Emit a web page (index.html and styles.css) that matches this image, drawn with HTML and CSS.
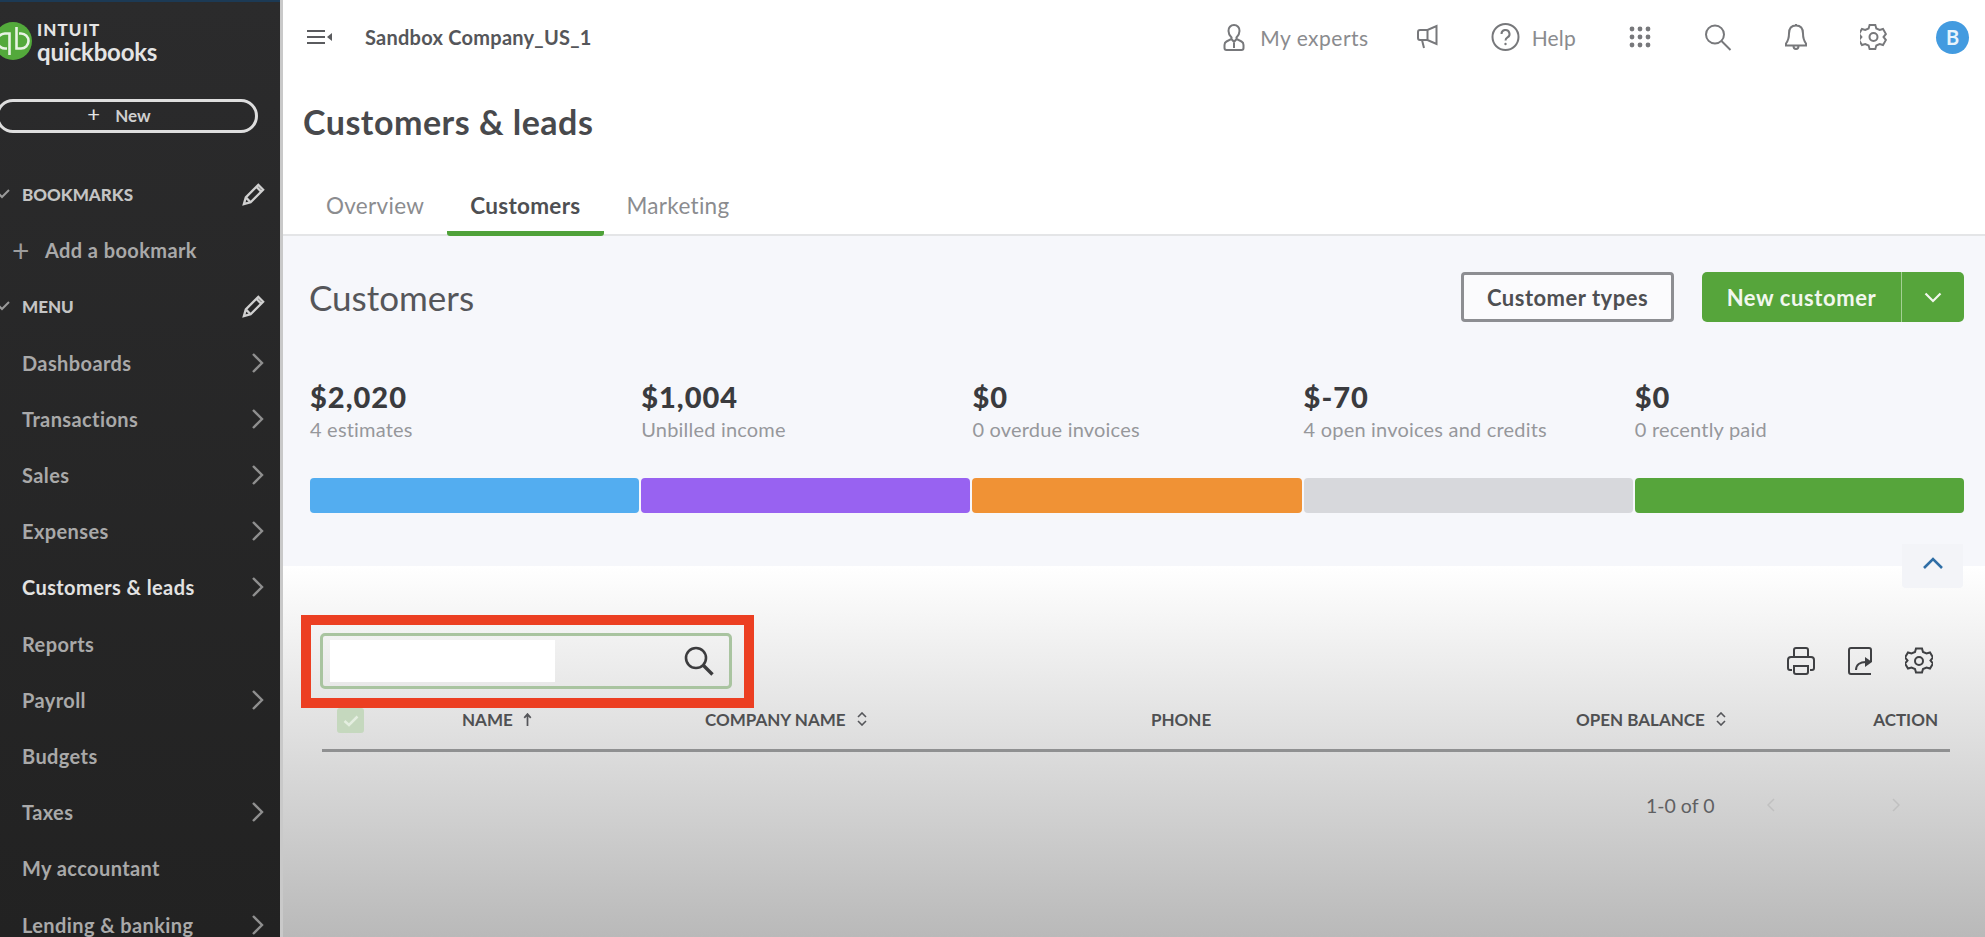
FILE: index.html
```html
<!DOCTYPE html>
<html lang="en">
  <head>
    <meta charset="utf-8" />
    <title>Customers &amp; leads</title>
    <link rel="stylesheet" href="styles.css">
  </head>

  <body>
    <div class="app">
      <aside class="sidebar">
        <div class="brand">
          <svg class="brand-logo" viewBox="0 0 38 38">
            <circle cx="19" cy="19" r="19" fill="#53a93b" />
            <path d="M15.500 33V11.500h-4.500a7.500 7.500 0 0 0 0 15h2M22.500 5v21.500h4.500a7.500 7.500 0 0 0 0-15h-2" fill="none" stroke="#e8f3e4" stroke-width="2.6" />
          </svg>
          <div class="brand-name">
            <span class="brand-top">INTUIT</span>
            <span class="brand-bottom">quickbooks</span>
          </div>
        </div>

        <button class="new-btn"><span class="new-plus">+</span> New</button>

        <div class="side-list">
          <div class="side-row side-head">
            <svg class="side-toggle" viewBox="0 0 12 10"><path d="M-1 5l3 3 7-7" /></svg>
            <span>BOOKMARKS</span>
            <svg class="side-pencil" viewBox="0 0 26 26"><path d="M3 23l2-7L18 3l5 5L10 21zM5 16l5 5M16 5l5 5" /></svg>
          </div>
          <div class="side-row side-add"><span class="side-add-plus">+</span>Add a bookmark</div>
          <div class="side-row side-head">
            <svg class="side-toggle" viewBox="0 0 12 10"><path d="M-1 5l3 3 7-7" /></svg>
            <span>MENU</span>
            <svg class="side-pencil" viewBox="0 0 26 26"><path d="M3 23l2-7L18 3l5 5L10 21zM5 16l5 5M16 5l5 5" /></svg>
          </div>
          <a class="side-row">Dashboards<svg class="side-more" viewBox="0 0 14 22"><path d="M2 2l9 9-9 9" /></svg></a>
          <a class="side-row">Transactions<svg class="side-more" viewBox="0 0 14 22"><path d="M2 2l9 9-9 9" /></svg></a>
          <a class="side-row">Sales<svg class="side-more" viewBox="0 0 14 22"><path d="M2 2l9 9-9 9" /></svg></a>
          <a class="side-row">Expenses<svg class="side-more" viewBox="0 0 14 22"><path d="M2 2l9 9-9 9" /></svg></a>
          <a class="side-row active">Customers &amp; leads<svg class="side-more" viewBox="0 0 14 22"><path d="M2 2l9 9-9 9" /></svg></a>
          <a class="side-row">Reports</a>
          <a class="side-row">Payroll<svg class="side-more" viewBox="0 0 14 22"><path d="M2 2l9 9-9 9" /></svg></a>
          <a class="side-row">Budgets</a>
          <a class="side-row">Taxes<svg class="side-more" viewBox="0 0 14 22"><path d="M2 2l9 9-9 9" /></svg></a>
          <a class="side-row">My accountant</a>
          <a class="side-row">Lending &amp; banking<svg class="side-more" viewBox="0 0 14 22"><path d="M2 2l9 9-9 9" /></svg></a>
        </div>
      </aside>

      <main class="main">
        <header class="topbar">
          <svg class="menu-icon" viewBox="0 0 26 16"><path d="M0 2h18M0 8h18M0 14h18" /><path class="menu-arrow" d="M25 4v8l-5-4z" /></svg>
          <span class="company">Sandbox Company_US_1</span>
          <div class="top-actions">
            <div class="top-link experts-link">
              <svg class="top-icon" width="22" height="29" viewBox="0 0 22 29"><path d="M11 2a5.500 5.500 0 0 1 5.500 6c0 3-1.500 5-3 6.500v1.500l5 2.500q2 1 2 3.500v3q0 2-2 2H3.500q-2 0-2-2v-3q0-2.500 2-3.500l5-2.500v-1.500c-1.500-1.500-3-3.500-3-6.500A5.500 5.500 0 0 1 11 2zM8.500 16l2.500 3 2.500-3M11 20v5" /></svg>
              <span>My experts</span>
            </div>
            <svg class="top-icon" width="21" height="26" viewBox="0 0 21 26"><path d="M19.500 2v18l-9-4H3q-2 0-2-2V8q0-2 2-2h7.500zM10.500 6v10M5 16l2 8" /></svg>
            <div class="top-link help-link">
              <svg class="top-icon" width="29" height="30" viewBox="0 0 29 30"><circle cx="14.500" cy="15" r="13" /><path d="M10.500 12a4 4 0 1 1 6 3.400c-1.300.8-2 1.400-2 3" /><circle class="top-dot" cx="14.500" cy="22" r="1.200" /></svg>
              <span>Help</span>
            </div>
            <svg class="top-grid" width="22" height="22" viewBox="0 0 22 22"><circle cx="3" cy="3" r="2.400" /><circle cx="11" cy="3" r="2.400" /><circle cx="19" cy="3" r="2.400" /><circle cx="3" cy="11" r="2.400" /><circle cx="11" cy="11" r="2.400" /><circle cx="19" cy="11" r="2.400" /><circle cx="3" cy="19" r="2.400" /><circle cx="11" cy="19" r="2.400" /><circle cx="19" cy="19" r="2.400" /></svg>
            <svg class="top-icon" width="28" height="27" viewBox="0 0 28 27"><circle cx="11" cy="10.500" r="9" /><path d="M17.500 17l9 9" /></svg>
            <svg class="top-icon" width="22" height="29" viewBox="0 0 22 29"><path d="M11 2.500c-5 0-7 3.500-7 8 0 5-1.500 8-3 10v2h20v-2c-1.500-2-3-5-3-10 0-4.500-2-8-7-8zM11 1v2M8.500 23a2.500 3 0 0 0 5 0" /></svg>
            <svg class="top-icon" width="27" height="28" viewBox="0 0 27 28"><path d="M10.500 2h6l1 3.500 3.500 1.500 3.500-1 3 5-2.500 3 2.500 3-3 5-3.500-1-3.500 1.500-1 3.500h-6l-1-3.500-3.500-1.500-3.500 1-3-5 2.500-3-2.500-3 3-5 3.500 1 3.500-1.500z" transform="translate(-.5 0) scale(.96 1)" /><circle cx="13.500" cy="14" r="4" /></svg>
            <div class="avatar">B</div>
          </div>
        </header>

        <h1 class="page-title">Customers &amp; leads</h1>

        <nav class="tabs">
          <a class="tab">Overview</a>
          <a class="tab active">Customers</a>
          <a class="tab">Marketing</a>
        </nav>

        <section class="panel">
          <div class="panel-head">
            <h2>Customers</h2>
            <button class="btn-outline">Customer types</button>
            <div class="btn-split">
              <button class="btn-main">New customer</button>
              <button class="btn-caret"><svg viewBox="0 0 18 11"><path d="M1.500 1.500L9 9l7.500-7.500" /></svg></button>
            </div>
          </div>

          <div class="stats">
            <div class="stat"><strong>$2,020</strong><span>4 estimates</span><i class="bar blue"></i></div>
            <div class="stat"><strong>$1,004</strong><span>Unbilled income</span><i class="bar purple"></i></div>
            <div class="stat"><strong>$0</strong><span>0 overdue invoices</span><i class="bar orange"></i></div>
            <div class="stat"><strong>$-70</strong><span>4 open invoices and credits</span><i class="bar grey"></i></div>
            <div class="stat"><strong>$0</strong><span>0 recently paid</span><i class="bar green"></i></div>
          </div>
        </section>

        <section class="table-area">
          <div class="collapse-tab"><svg viewBox="0 0 22 13"><path d="M2 11l9-9 9 9" /></svg></div>

          <div class="table-tools">
            <div class="search-box">
              <div class="search-hidden"></div>
              <svg class="search-icon" viewBox="0 0 30 30"><circle cx="12" cy="12" r="10" /><path class="thick" d="M19.500 19.500l9 9" /></svg>
            </div>
            <div class="tool-icons">
              <svg viewBox="0 0 28 28"><path d="M7 10V3q0-2 2-2h10q2 0 2 2v7M5 23H3q-2 0-2-2v-8q0-3 3-3h20q3 0 3 3v8q0 2-2 2h-2M7 19h14v6q0 2-2 2H9q-2 0-2-2z" /></svg>
              <svg viewBox="0 0 26 28"><path d="M24 15V3q0-2-2-2H4Q2 1 2 3v22q0 2 2 2h20M9 23c0-5 4-8 10-8" /><path class="solid" d="M18 10l7 5-7 5z" /></svg>
              <svg viewBox="0 0 28 28"><path d="M11 1.500h6l1 3.500 3.500 1.500 3.500-1 3 5-2.500 3 2.500 3-3 5-3.500-1-3.500 1.500-1 3.500h-6l-1-3.500-3.500-1.500-3.500 1-3-5 2.500-3-2.500-3 3-5 3.500 1 3.500-1.500z" /><circle cx="14" cy="14" r="4" /></svg>
            </div>
          </div>

          <div class="table-head">
            <div><span class="check"><svg viewBox="0 0 16 12"><path d="M1.500 6l4.500 4 8.500-8.500" /></svg></span></div>
            <div>NAME <svg class="sort-up" viewBox="0 0 8 12"><path d="M4 12V2M1 4.500L4 1l3 3.500" /></svg></div>
            <div>COMPANY NAME <svg class="sort" viewBox="0 0 10 14"><path d="M1 5l4-4 4 4M1 9l4 4 4-4" /></svg></div>
            <div>PHONE</div>
            <div>OPEN BALANCE <svg class="sort" viewBox="0 0 10 14"><path d="M1 5l4-4 4 4M1 9l4 4 4-4" /></svg></div>
            <div class="col-action">ACTION</div>
          </div>

          <div class="pager">
            <span>1-0 of 0</span>
            <svg class="pager-prev" viewBox="0 0 8 14"><path d="M7 1L1 7l6 6" /></svg>
            <svg class="pager-next" viewBox="0 0 8 14"><path d="M1 1l6 6-6 6" /></svg>
          </div>

          <div class="red-mark"></div>
        </section>
      </main>
    </div>
  </body>
</html>
```

FILE: styles.css
```css
* {
  box-sizing: border-box;
}

html,
body {
  margin: 0;
  height: 937px;
  overflow: hidden;
}

body {
  font-family: "Lato", "Open Sans", sans-serif;
  color: #393a3d;
  background: #fff;
}

button {
  font-family: inherit;
  cursor: pointer;
}

.app {
  display: flex;
  height: 937px;
}

/* sidebar */

.sidebar {
  flex: 0 0 280px;
  height: 937px;
  overflow: hidden;
  padding-top: 20px;
  border-top: 2px solid #1c3a55;
  background: linear-gradient(#2b2b2c, #222);
  color: #bdbdbd;
}

.brand {
  display: flex;
  align-items: center;
  gap: 5px;
  height: 38px;
  margin-left: -6px;
}

.brand-logo {
  flex: none;
  width: 38px;
  height: 38px;
}

.brand-name {
  display: flex;
  flex-direction: column;
  margin-top: 3px;
  color: #e4e4e4;
}

.brand-top {
  font-size: 17px;
  font-weight: 900;
  line-height: 18px;
  letter-spacing: 1.1px;
}

.brand-bottom {
  font-size: 24px;
  font-weight: 700;
  line-height: 25px;
  letter-spacing: -0.2px;
}

.new-btn {
  display: block;
  width: 262px;
  height: 34px;
  margin: 39px 0 0 -4px;
  padding: 0 16px 2px 0;
  border: 3px solid #dedede;
  border-radius: 17px;
  background: transparent;
  color: #cfcfcf;
  font-size: 17px;
  font-weight: 700;
}

.new-plus {
  margin-right: 11px;
  font-size: 22px;
  font-weight: 400;
  line-height: 10px;
  color: #e6e6e6;
}

.side-list {
  margin-top: 33px;
}

.side-row {
  display: flex;
  align-items: center;
  height: 56.2px;
  padding: 0 15px 0 22px;
  font-size: 20px;
  font-weight: 700;
  letter-spacing: 0.4px;
  color: #a9a9a9;
}

.side-row.active {
  color: #e2e2e2;
}

.side-head {
  position: relative;
  padding-right: 16px;
  font-size: 17px;
  font-weight: 900;
  letter-spacing: 0;
  color: #c4c4c4;
}

.side-toggle {
  flex: none;
  width: 12px;
  height: 10px;
  margin-left: -22px;
  margin-right: 10px;
  fill: none;
  stroke: #9a9a9a;
  stroke-width: 2;
}

.side-pencil {
  flex: none;
  width: 25px;
  height: 25px;
  margin-left: auto;
  margin-right: -2px;
  fill: none;
  stroke: #d0d0d0;
  stroke-width: 2.4;
}

.side-add {
  padding-left: 12px;
}

.side-add-plus {
  width: 33px;
  font-size: 30px;
  font-weight: 400;
  line-height: 20px;
  color: #9c9c9c;
}

.side-more {
  flex: none;
  width: 14px;
  height: 22px;
  margin-left: auto;
  fill: none;
  stroke: #8f8f8f;
  stroke-width: 2.4;
}

/* main column */

.main {
  position: relative;
  display: flex;
  flex-direction: column;
  flex: 1;
  min-width: 0;
  border-left: 3px solid #c9c9c9;
}

.topbar {
  display: flex;
  align-items: center;
  height: 74px;
  padding: 0 16px 0 24px;
}

.menu-icon {
  width: 26px;
  height: 16px;
  fill: none;
  stroke: #5a5b5e;
  stroke-width: 2;
}

.menu-icon .menu-arrow {
  fill: #5a5b5e;
  stroke: none;
}

.company {
  margin-left: 32px;
  font-size: 20px;
  font-weight: 700;
  letter-spacing: 0.25px;
  color: #55565a;
}

.top-actions {
  display: flex;
  align-items: center;
  gap: 53px;
  margin-left: auto;
}

.top-link {
  display: flex;
  align-items: center;
  gap: 17px;
  font-size: 21px;
  letter-spacing: 0.2px;
  color: #8a8b8e;
}

.experts-link {
  gap: 15px;
  margin-right: -5px;
  letter-spacing: 0.5px;
}

.help-link {
  gap: 12px;
}

.top-icon {
  fill: none;
  stroke: #77787b;
  stroke-width: 2;
}

.top-icon .top-dot {
  fill: #77787b;
  stroke: none;
}

.top-grid {
  fill: #77787b;
}

.avatar {
  display: flex;
  align-items: center;
  justify-content: center;
  width: 33px;
  height: 33px;
  margin-left: -4px;
  border-radius: 50%;
  background: #439be0;
  color: #e8f4fc;
  font-size: 20px;
  font-weight: 700;
}

.page-title {
  margin: 26px 0 0 20px;
  font-size: 34px;
  font-weight: 700;
  line-height: 44px;
  letter-spacing: 0.5px;
  color: #48494c;
}

.tabs {
  display: flex;
  height: 64px;
  margin-top: 28px;
  padding-left: 20px;
  border-bottom: 2px solid #e4e5e7;
}

.tab {
  height: 64px;
  padding: 20px 23px 0;
  font-size: 22.500px;
  letter-spacing: 0.3px;
  color: #8b8c8f;
  border-bottom: 5px solid transparent;
}

.tab.active {
  font-weight: 700;
  color: #4e4f52;
  border-bottom-color: #4fa23a;
  border-radius: 0 0 3px 3px;
}

/* customers panel */

.panel {
  height: 330px;
  padding: 36px 21px 0 27px;
  background: #f6f7fb;
}

.panel-head {
  display: flex;
  align-items: center;
  height: 50px;
}

.panel-head h2 {
  margin: 0 auto 0 -1px;
  font-size: 35px;
  font-weight: 400;
  color: #55565a;
}

.btn-outline {
  width: 213px;
  height: 50px;
  margin-right: 28px;
  border: 3px solid #8d8e92;
  border-radius: 4px;
  background: #fbfbfd;
  color: #4e4f52;
  font-size: 22px;
  font-weight: 700;
  letter-spacing: 0.5px;
}

.btn-split {
  display: flex;
  width: 262px;
  height: 50px;
  border-radius: 5px;
  overflow: hidden;
  background: #56a53b;
}

.btn-main {
  width: 200px;
  padding: 0;
  border: 0;
  border-right: 1px solid #a4d094;
  background: transparent;
  color: #f2f7ee;
  font-size: 22px;
  font-weight: 700;
  letter-spacing: 0.6px;
}

.btn-caret {
  display: flex;
  align-items: center;
  justify-content: center;
  flex: 1;
  padding: 0;
  border: 0;
  background: transparent;
}

.btn-caret svg {
  width: 18px;
  height: 11px;
  fill: none;
  stroke: #f2f7ee;
  stroke-width: 2.2;
}

.stats {
  display: grid;
  grid-template-columns: repeat(5, 1fr);
  column-gap: 2px;
  margin-top: 57px;
}

.stat {
  display: flex;
  flex-direction: column;
}

.stat strong {
  font-size: 29px;
  font-weight: 900;
  line-height: 36px;
  letter-spacing: 1px;
  color: #3a3b3e;
}

.stat span {
  margin-top: 2px;
  font-size: 20px;
  line-height: 24px;
  letter-spacing: 0.2px;
  color: #96979b;
}

.bar {
  display: block;
  height: 35px;
  margin-top: 37px;
  border-radius: 4px;
}

.bar.blue { background: #53adf0; }
.bar.purple { background: #9862f1; }
.bar.orange { background: #f09235; }
.bar.grey { background: #d7d8dc; }
.bar.green { background: #56a53b; }

/* table */

.table-area {
  position: relative;
  flex: 1;
  padding: 67px 35px 0 37px;
  background: linear-gradient(#fff, #b9b9b9);
}

.collapse-tab {
  position: absolute;
  top: -22px;
  right: 22px;
  display: flex;
  justify-content: center;
  width: 61px;
  height: 44px;
  padding-top: 13px;
  border-radius: 0 0 4px 4px;
  background: #f3f4f8;
}

.collapse-tab svg {
  width: 22px;
  height: 13px;
  fill: none;
  stroke: #2f6ea6;
  stroke-width: 2.6;
}

.table-tools {
  display: flex;
  align-items: center;
  justify-content: space-between;
  padding-right: 17px;
}

.search-box {
  display: flex;
  align-items: center;
  justify-content: space-between;
  width: 412px;
  height: 56px;
  padding: 0 15px 0 7px;
  border: 3px solid #a9c4a0;
  border-radius: 5px;
}

.search-hidden {
  width: 225px;
  height: 42px;
  background: #fff;
}

.search-icon {
  width: 30px;
  height: 30px;
  fill: none;
  stroke: #3c3c3e;
  stroke-width: 2.6;
}

.search-icon .thick {
  stroke-width: 3.4;
}

.tool-icons {
  display: flex;
  align-items: center;
  gap: 31px;
}

.tool-icons svg {
  width: 28px;
  height: 28px;
  fill: none;
  stroke: #3f4043;
  stroke-width: 2;
}

.tool-icons .solid {
  fill: #3f4043;
  stroke: none;
}

.table-head {
  display: grid;
  grid-template-columns: 140px 243px 446px 425px 1fr 80px;
  height: 44px;
  margin: 19px 0 0 2px;
  padding-top: 1px;
  border-bottom: 3px solid #8f9091;
  font-size: 17px;
  font-weight: 700;
  line-height: 22px;
  color: #4f5052;
}

.table-head > div:first-child {
  padding-left: 15px;
}

.check {
  display: flex;
  align-items: center;
  justify-content: center;
  width: 27px;
  height: 25px;
  margin-top: -1px;
  border-radius: 3px;
  background: #c5d8be;
}

.check svg {
  width: 16px;
  height: 12px;
  fill: none;
  stroke: #e4eee0;
  stroke-width: 2.5;
}

.sort-up,
.sort {
  margin-left: 7px;
  fill: none;
  stroke: #55565a;
  stroke-width: 1.6;
}

.sort-up {
  width: 9px;
  height: 13px;
  margin-left: 6px;
}

.sort {
  width: 10px;
  height: 14px;
}

.col-action {
  padding-right: 12px;
  text-align: right;
}

.pager {
  display: flex;
  align-items: center;
  height: 24px;
  margin: 41px 0 0 1326px;
  font-size: 19.500px;
  color: #5f6062;
}

.pager-prev,
.pager-next {
  width: 8px;
  height: 14px;
  fill: none;
  stroke: #c0c0c0;
  stroke-width: 1.5;
}

.pager-prev {
  margin-left: 53px;
}

.pager-next {
  margin-left: 117px;
}

/* red annotation drawn on top of the screenshot */

.red-mark {
  position: absolute;
  top: 49px;
  left: 18px;
  width: 453px;
  height: 93px;
  border: 10px solid #ec3f22;
}
```
